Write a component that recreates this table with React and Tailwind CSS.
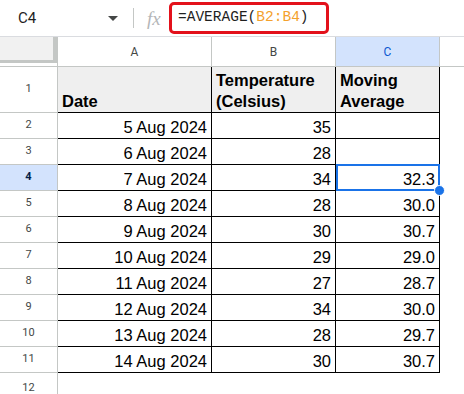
import React from 'react';

const rows = [
  ['5 Aug 2024', '35', ''],
  ['6 Aug 2024', '28', ''],
  ['7 Aug 2024', '34', '32.3'],
  ['8 Aug 2024', '28', '30.0'],
  ['9 Aug 2024', '30', '30.7'],
  ['10 Aug 2024', '29', '29.0'],
  ['11 Aug 2024', '27', '28.7'],
  ['12 Aug 2024', '34', '30.0'],
  ['13 Aug 2024', '28', '29.7'],
  ['14 Aug 2024', '30', '30.7'],
];

const ui = { fontFamily: 'Roboto, "Liberation Sans", sans-serif' };
const cellFont = { fontFamily: '"Liberation Sans", Arial, sans-serif' };

const App = () => {
  // --- shared cell styles ---
  const rowHead = "flex items-center justify-center text-[11px] text-[#444746] border-r border-b border-[#c4c7c5] bg-white";
  const dataCell = "flex items-center justify-end pr-[4px] pt-[3px] text-[16.5px] text-black border-b border-r border-black bg-white";
  const headCell = "flex items-end pb-[0px] pl-[4px] text-[16.5px] font-bold leading-[21px] text-black border-b border-r border-black bg-[#efefef]";

  return (
    <div className="w-[464px] h-[394px] overflow-hidden bg-white" style={ui}>

      {/* Formula bar */}
      <div className="flex items-center h-[37px] border-b border-[#dadce0]">
        <div className="flex items-center w-[133px] pl-[18px] pr-[15px] h-full">
          <span className="text-[15px] text-[#1f1f1f]">C4</span>
          <span className="ml-auto w-0 h-0 border-l-[5px] border-r-[5px] border-t-[5px] border-l-transparent border-r-transparent border-t-[#444746]"></span>
        </div>
        <div className="w-px h-[20px] bg-[#c4c7c5]"></div>
        <span className="ml-[13px] w-[21px] text-[19px] italic text-[#b4b6b8] leading-none" style={{ fontFamily: '"Liberation Serif", serif' }}>fx</span>
        <div className="ml-[1px] flex items-center w-[160px] h-[32px] border-[3px] border-[#e3111b] rounded-[5px] pl-[6px] text-[14.5px] text-[#1f1f1f]" style={{ fontFamily: '"Liberation Mono", "DejaVu Sans Mono", monospace' }}>
          <span>=AVERAGE(</span>
          <span className="text-[#f4a12c]">B2:B4</span>
          <span>)</span>
        </div>
      </div>

      {/* Sheet grid */}
      <div className="grid grid-cols-[58px_154px_124px_104px_1fr] grid-rows-[30px_46px_repeat(10,26px)_1fr] h-[357px]">

        {/* Column headers */}
        <div className="relative border-r border-b border-[#c4c7c5] bg-white">
          <div className="h-[26px] w-[57px] bg-[#f1f1f1] border-r-[4px] border-b-[3px] border-[#c4c7c5]"></div>
        </div>
        <div className="flex items-center justify-center text-[12px] text-[#444746] border-r border-b border-[#c4c7c5]">A</div>
        <div className="flex items-center justify-center text-[12px] text-[#444746] border-r border-b border-[#c4c7c5]">B</div>
        <div className="flex items-center justify-center text-[12px] text-[#0b57d0] bg-[#d3e3fd] border-r border-b border-[#c4c7c5]">C</div>
        <div className="border-b border-[#c4c7c5]"></div>

        {/* Row 1: headers */}
        <div className={rowHead}>1</div>
        <div className={headCell} style={cellFont}>Date</div>
        <div className={headCell} style={cellFont}>Temperature<br />(Celsius)</div>
        <div className={headCell} style={cellFont}>Moving<br />Average</div>
        <div></div>

        {rows.map((r, i) => {
          const n = i + 2;
          const active = n === 4;
          return (
            <React.Fragment key={n}>
              <div className={active ? "flex items-center justify-center text-[11px] font-bold text-[#041e49] border-r border-b border-[#c4c7c5] bg-[#d3e3fd]" : rowHead}>{n}</div>
              <div className={dataCell} style={cellFont}>{r[0]}</div>
              <div className={dataCell} style={cellFont}>{r[1]}</div>
              <div className={`${dataCell} relative ${active ? 'z-10' : ''}`} style={cellFont}>
                {r[2]}
                {active && (
                  <>
                    <div className="absolute left-0 -top-[1px] right-[-1px] bottom-[-1px] border-2 border-[#1a73e8] pointer-events-none"></div>
                    <div className="absolute right-[-6px] bottom-[-6px] w-[11px] h-[11px] rounded-full bg-[#1a73e8] border border-white"></div>
                  </>
                )}
              </div>
              <div></div>
            </React.Fragment>
          );
        })}

        {/* Row 12 */}
        <div className="flex items-start justify-center pt-[7px] text-[11px] text-[#444746] border-r border-[#c4c7c5]">12</div>
        <div className="col-span-4"></div>
      </div>
    </div>
  );
};

export default App;
